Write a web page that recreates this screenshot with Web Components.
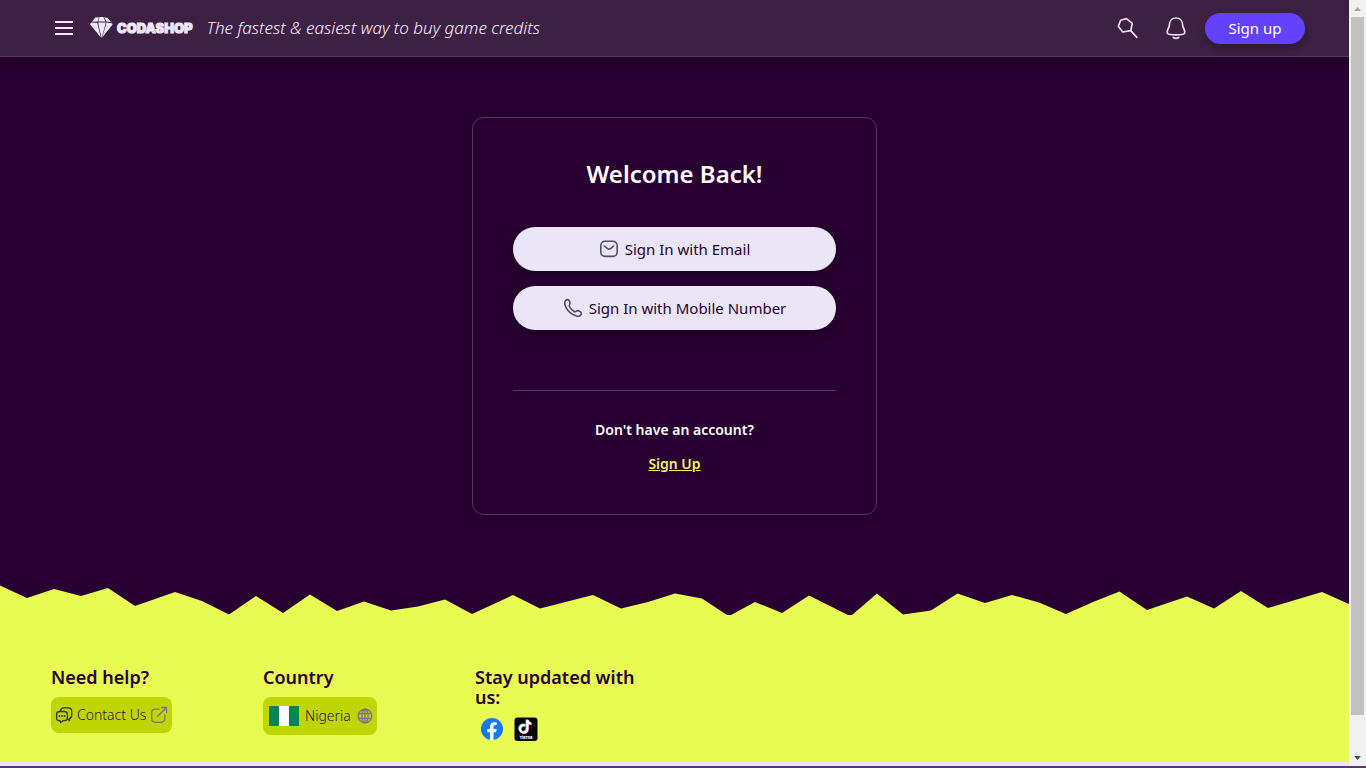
<!DOCTYPE html>
<html lang="en">
<head>
<meta charset="utf-8">
<title>Codashop - Sign in</title>
<style>
  :root {
    --ink: #280031;
    --bar: #3e2044;
    --line: #5b3566;
    --mist: #eae6f7;
    --lime: #e7fb53;
    --olive: #c0d604;
    --violet: #6242fc;
  }
  html { background: #5f3475; }
  body { margin: 0; font-family: "Noto Sans", sans-serif; color: #fff; }
</style>
</head>
<body>
<app-shell>
  <site-header slot="header" tagline="The fastest &amp; easiest way to buy game credits"></site-header>
  <sign-in-card heading="Welcome Back!">
    <pill-button><ui-icon slot="icon" name="mail"></ui-icon>Sign In with Email</pill-button>
    <pill-button><ui-icon slot="icon" name="phone"></ui-icon>Sign In with Mobile Number</pill-button>
    <span slot="prompt">Don't have an account?</span>
    <text-link slot="action" href="#signup">Sign Up</text-link>
  </sign-in-card>
  <site-footer slot="footer">
    <footer-column heading="Need help?">
      <chip-link href="#contact"><ui-icon slot="before" name="chat"></ui-icon>Contact Us<ui-icon slot="after" name="external"></ui-icon></chip-link>
    </footer-column>
    <footer-column heading="Country">
      <chip-link href="#country" size="large"><ui-icon slot="before" name="flag"></ui-icon>Nigeria<ui-icon slot="after" name="globe"></ui-icon></chip-link>
    </footer-column>
    <footer-column heading="Stay updated with us:">
      <social-links></social-links>
    </footer-column>
  </site-footer>
</app-shell>

<script>
const define = (name, html, setup) => {
  const template = document.createElement('template');
  template.innerHTML = html;
  customElements.define(name, class extends HTMLElement {
    connectedCallback() {
      if (this.shadowRoot) return;
      const root = this.attachShadow({ mode: 'open' });
      root.append(template.content.cloneNode(true));
      if (setup) setup(root, this);
    }
  });
};

const icons = {
  menu: [20, 18, '<g stroke="#f3e9fb" stroke-width="2"><path d="M1 3h18M1 9h18M1 15h18"/></g>'],
  search: [22, 22, '<g fill="none" stroke="#eadff3" stroke-width="1.700" stroke-linejoin="round" stroke-linecap="round"><path d="M2.300 9.300 4.700 3.300 10.300 1.600 16.300 6.300 14.700 13.700 6.700 15z"/><path d="m14.700 13.700 6.200 6.600"/></g>'],
  bell: [22, 24, '<g fill="none" stroke="#eadff3" stroke-width="1.7" stroke-linecap="round" stroke-linejoin="round"><path d="M11 2C7 2 4.700 4.800 4.500 8c-.2 4-1.500 4.400-2.200 7.200-.5 2 .6 3.100 2.700 3.300 4 .4 8 .4 12 0 2.100-.2 3.200-1.300 2.700-3.300-.7-2.800-2-3.200-2.200-7.200C17.300 4.800 15 2 11 2z"/><path d="M8.300 21.500c1.500 1 3.900 1 5.400 0"/></g>'],
  mail: [20, 20, '<g fill="none" stroke="#505058" stroke-width="1.600" stroke-linecap="round" stroke-linejoin="round"><rect x="1.800" y="2.200" width="16.400" height="15.200" rx="4.300"/><path d="m5.300 7 3.200 2.600c.9.700 2.100.7 3 0L14.700 7"/></g>'],
  phone: [20, 20, '<path d="M2.200 3.200C3.300 1.300 5.300 1 6.400 2.900c1 1.700 1.100 2.600.2 3.700-.8 1-.5 1.700.3 2.800 1.200 1.700 2.400 2.900 4 3.900 1.100.7 1.700.6 2.500-.1.900-.8 1.900-.7 3.300.2 2 1.200 2.100 2.300.9 3.800-.9 1.100-2.200 1.400-4.100.8C7.500 16.100 3.400 11.600 1.900 6.700c-.4-1.300-.3-2.500.3-3.500z" fill="none" stroke="#505058" stroke-width="1.600" stroke-linejoin="round"/>'],
  chat: [18, 18, '<g fill="none" stroke="#35303a" stroke-width="1.300" stroke-linecap="round" stroke-linejoin="round"><path d="M5.500 4.600C6 2.500 7 1.800 9 1.800h4.200c2.200 0 3.500 1.200 3.500 3.400v4c0 2-.7 3-2.400 3.300l.2 2-1.800-1"/><path d="M4.700 5.500h4.700c2 0 3 1.200 3 3v3.300c0 1.900-1.200 2.900-3 2.900H8L5.600 16.600 5 14.700h-.4c-1.900 0-3-1.100-3-2.900V8.500c0-1.900 1.200-3 3.100-3z"/></g><g fill="#35303a"><circle cx="4.500" cy="10" r=".9"/><circle cx="7" cy="10" r=".9"/><circle cx="9.500" cy="10" r=".9"/></g>'],
  external: [18, 18, '<g fill="none" stroke="#7b728c" stroke-width="1.300" stroke-linecap="round" stroke-linejoin="round"><path d="M9 3.200H5.400C3 3.200 1.700 4.500 1.700 6.900v5.700c0 2.400 1.300 3.700 3.700 3.700h5.700c2.400 0 3.700-1.300 3.700-3.700V9M7.500 10.500l9-9M11.500 1.500h5v5"/></g>'],
  globe: [16, 16, '<g fill="none" stroke="#7b728c" stroke-width="1.400"><circle cx="8" cy="8" r="6.800"/><ellipse cx="8" cy="8" rx="3.100" ry="6.800"/><path d="M8 1v14M1.800 5.600h12.400M1.800 10.400h12.400"/></g>'],
  flag: [30, 20, '<path fill="#fff" d="M0 0h30v20H0z"/><path fill="#008751" d="M0 0h10v20H0zM20 0h10v20H20z"/>'],
  gem: [24, 24, '<g fill="#eee7f7"><path d="M6.300 1.600 10 1.200 8.600 5.500 3 5.800zM10.500 1h3.900l2 4.400H9.200zM15.100 1.200l3.600.8 3.400 4-4.500-.5zM1 8.200l1.400-1.700 5.800.2.600 2.300 3 12.500zM9.200 6.400h7.600l-.8 3.300-3.400 12.400-2.800-12zM17.600 6.500l5.400.8.6 1.200-10.400 13z"/></g>'],
  facebook: [24, 24, '<circle cx="12" cy="12" r="11" fill="#1877f2"/><path fill="#fff" d="M10.100 23v-7.700H7.300V12h2.800V9.600c0-2.900 1.700-4.400 4.200-4.400 1.200 0 2.400.2 2.400.2v2.700h-1.400c-1.400 0-1.800.8-1.800 1.700V12h3.100l-.5 3.300h-2.600V23z"/>'],
  tiktok: [24, 24, '<rect x=".500" y=".500" width="23" height="23.500" rx="3" fill="#050507"/><g fill="none" stroke-width="2.200"><path d="M11.400 8.400a3.700 3.700 0 1 0 2 3.500V3" stroke="#55dfe2" transform="translate(-.7 -.4)"/><path d="M11.400 8.600a3.700 3.700 0 1 0 2 3.500V3c.3 2.200 1.700 3.500 3.900 3.700" stroke="#ed3c63" transform="translate(.6 .4)"/><path d="M11.400 8.600a3.700 3.700 0 1 0 2 3.500V3c.3 2.200 1.700 3.500 3.900 3.700" stroke="#fff"/></g><text x="12" y="22" text-anchor="middle" fill="#fff" font-family="Inter, sans-serif" font-size="4" font-weight="800">TikTok</text>'],
  up: [7, 4, '<path fill="#a3a3a3" d="M0 4 3.500 0 7 4z"/>'],
  down: [7, 4, '<path fill="#505050" d="M0 0h7L3.500 4z"/>']
};

define('ui-icon', `<style>:host{display:block;flex:none;line-height:0} svg{display:block}</style>`, (root, el) => {
  const [w, h, body] = icons[el.getAttribute('name')];
  root.innerHTML += `<svg width="${w}" height="${h}" viewBox="0 0 ${w} ${h}" aria-hidden="true">${body}</svg>`;
});

define('app-shell', `
<style>
  :host { display: flex; flex-direction: column; min-height: 100vh; box-sizing: border-box; border-bottom: 2px solid #5f3475; }
  .frame { flex: 1; display: flex; }
  .page { flex: 1; min-width: 0; display: flex; flex-direction: column; background: var(--ink); border-bottom: 4px solid var(--mist); }
  main { flex: 1; display: flex; justify-content: center; align-items: flex-start; padding: 60px 20px 70px; }
</style>
<div class="frame">
  <div class="page">
    <slot name="header"></slot>
    <main><slot></slot></main>
    <slot name="footer"></slot>
  </div>
  <scroll-rail></scroll-rail>
</div>`);

define('scroll-rail', `
<style>
  :host { display: flex; flex-direction: column; width: 17px; background: #f1f1f1; }
  .cap { height: 17px; display: grid; place-items: center; }
  .track { flex: 1; display: flex; flex-direction: column; padding: 0 2px 34px; }
  .thumb { flex: 1; background: #c1c1c1; }
</style>
<div class="cap"><ui-icon name="up"></ui-icon></div>
<div class="track"><div class="thumb"></div></div>
<div class="cap"><ui-icon name="down"></ui-icon></div>`);

define('site-header', `
<style>
  :host { display: flex; align-items: center; height: 56px; padding: 0 44px 0 54px; background: var(--bar); border-bottom: 1px solid var(--line); box-shadow: 0 4px 12px rgba(0,0,0,.2); }
  button { border: 0; padding: 0; background: none; font: inherit; color: inherit; }
  .brand { display: flex; align-items: center; gap: 4px; margin-left: 15px; text-decoration: none; color: #eee7f7; }
  .brand span { font: 900 13px/20px Inter, sans-serif; -webkit-text-stroke: 1px #eee7f7; }
  p { flex: 1; margin: 0 0 0 14px; font-size: 17px; font-weight: 300; font-style: italic; line-height: 24px; color: #f8effc; }
  .tools { display: flex; align-items: center; }
  .bell { margin: 0 18px 0 27px; }
  .join { width: 100px; height: 31px; border-radius: 16px; background: var(--violet); color: #fff; font-size: 15px; box-shadow: 0 4px 8px rgba(0,0,0,.25); }
</style>
<button aria-label="Menu"><ui-icon name="menu"></ui-icon></button>
<a class="brand" href="#home"><ui-icon name="gem"></ui-icon><span>CODASHOP</span></a>
<p></p>
<div class="tools">
  <button aria-label="Search"><ui-icon name="search"></ui-icon></button>
  <button class="bell" aria-label="Notifications"><ui-icon name="bell"></ui-icon></button>
  <button class="join">Sign up</button>
</div>`, (root, el) => { root.querySelector('p').textContent = el.getAttribute('tagline'); });

define('sign-in-card', `
<style>
  :host { display: block; box-sizing: border-box; width: 100%; max-width: 405px; padding: 40px; border: 1px solid var(--line); border-radius: 12px; text-align: center; }
  h1 { margin: 0 0 37px; font-size: 24px; font-weight: 600; line-height: 32px; }
  .options { display: flex; flex-direction: column; gap: 15px; }
  .join { margin-top: 60px; border-top: 1px solid var(--line); padding-top: 29px; display: flex; flex-direction: column; align-items: center; gap: 14px; font-size: 14px; font-weight: 600; line-height: 20px; }
</style>
<h1></h1>
<div class="options"><slot></slot></div>
<div class="join"><slot name="prompt"></slot><slot name="action"></slot></div>`,
(root, el) => { root.querySelector('h1').textContent = el.getAttribute('heading'); });

define('pill-button', `
<style>
  :host { display: block; }
  button { width: 100%; height: 44px; display: flex; align-items: center; justify-content: center; gap: 6px; border: 0; border-radius: 22px; background: var(--mist); color: var(--ink); font: 400 15px/20px "Noto Sans", sans-serif; box-shadow: 0 4px 8px rgba(0,0,0,.25); }
</style>
<button type="button"><slot name="icon"></slot><span><slot></slot></span></button>`);

define('text-link', `
<style>:host{display:block} a{color:#f3f06a;text-decoration:underline}</style>
<a><slot></slot></a>`, (root, el) => { root.querySelector('a').href = el.getAttribute('href'); });

define('site-footer', `
<style>
  :host { display: block; color: var(--ink); }
  svg { display: block; width: 100%; height: 30px; }
  .columns { display: flex; flex-wrap: wrap; gap: 20px 52px; box-sizing: border-box; min-height: 147px; padding: 52px 51px 20px; background: var(--lime); }
</style>
<svg viewBox="0 0 1349 30" preserveAspectRatio="none" aria-hidden="true"><path fill="#e7fb53" d="M0 .5 27 13 54 4l27 7 27-8 27 18 40-14 27 9 27 13.500L256 11l27 17 27-18.500L337 26l27-9.500 27 9 27-4 27-7L472 29l41-19 27 13.500L593 10l28 13.500 27-6.500 27-8.500 27 5L727 30h4l24-13 27 11 27-17.500L848 30h4l25-21.500 26 21 28-4 26.500-17L985 18l27-8 27 7.500 27 11.500 27-12 26.500-10.500L1147 25l40-13.500 27 12L1241 6l27 17 27-8 27-8 27 12v11H0z"/></svg>
<div class="columns"><slot></slot></div>`);

define('footer-column', `
<style>
  :host { display: flex; flex-direction: column; align-items: flex-start; width: 160px; }
  h2 { margin: 0 0 10px; font-size: 18px; font-weight: 600; line-height: 20px; }
</style>
<h2></h2><slot></slot>`, (root, el) => { root.querySelector('h2').textContent = el.getAttribute('heading'); });

define('chip-link', `
<style>
  :host { display: block; }
  a { display: flex; align-items: center; gap: 4px; height: 36px; padding: 0 4px; border-radius: 8px; background: var(--olive); color: #35103c; text-decoration: none; font-size: 14px; font-weight: 300; line-height: 20px; }
  :host([size="large"]) a { height: 38px; padding: 0 4px 0 6px; gap: 6px; }
</style>
<a><slot name="before"></slot><span><slot></slot></span><slot name="after"></slot></a>`,
(root, el) => { root.querySelector('a').href = el.getAttribute('href'); });

define('social-links', `
<style>:host{display:flex;gap:10px;padding-left:5px} a{display:block}</style>
<a href="#facebook" aria-label="Facebook"><ui-icon name="facebook"></ui-icon></a>
<a href="#tiktok" aria-label="TikTok"><ui-icon name="tiktok"></ui-icon></a>`);
</script>
</body>
</html>
